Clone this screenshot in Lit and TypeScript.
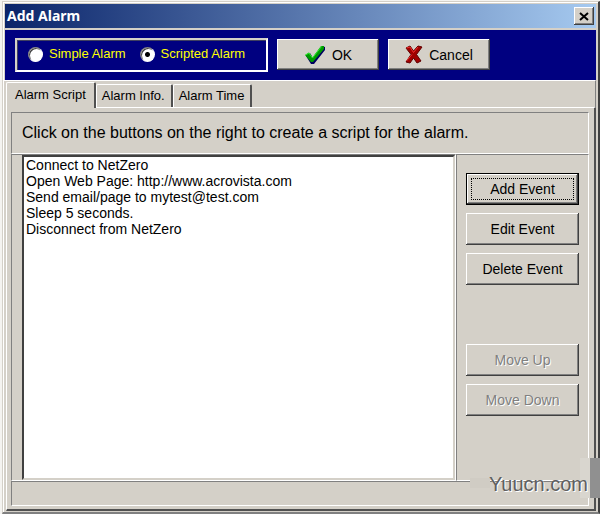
import { LitElement, html, css, svg } from "lit";
import { customElement, state } from "lit/decorators.js";

const check = svg`<path d="M2 11 L6 8 L9 13 L18 1 L21 2 L21 5 L10 19 L7 19 Z" fill="#000060"/><path d="M1 10 L5 7.500 L8.500 12.500 L17 1 L20 1 L20 4 L9 17 L7 17 Z" fill="#009a00"/><path d="M1.500 10 L5 8 L8.500 13 L17.500 1.500" fill="none" stroke="#30ee30"/>`;
const cross = svg`<path d="M1 3 L5 1 L8.500 6 L13 1 L17 2 L11.500 9.500 L16 16 L12 18 L8.500 13 L5 18 L1 17 L6 9.500 Z" fill="#a00000" stroke="#600000"/><path d="M1.500 3 L5 2 L8.500 7.500 L13 2 M1.500 16 L7 9.500" fill="none" stroke="#f03030"/>`;

@customElement("app-root")
export class AppRoot extends LitElement {
  @state() private mode = "scripted";
  @state() private tab = 0;

  private tabs = ["Alarm Script", "Alarm Info.", "Alarm Time"];
  private events = [
    "Connect to NetZero",
    "Open Web Page: http://www.acrovista.com",
    "Send email/page to mytest@test.com",
    "Sleep 5 seconds.",
    "Disconnect from NetZero",
  ];

  static styles = css`
    * { box-sizing: border-box; margin: 0; }
    :host {
      display: flex; min-height: 100vh; box-sizing: border-box; padding: 1px 0 0 2px;
      background: #f4f3f0; color: #000; position: relative;
      font: 14px/16px "Liberation Sans", Arial, sans-serif;
    }
    .window {
      flex: 1; display: flex; flex-direction: column; min-width: 0; padding: 1px;
      background: #d4d0c8; border: 1px solid #d4d0c8; border-right: 2px solid #404040; border-bottom: 2px solid #808080;
      box-shadow: inset 1px 1px #fff;
    }
    .title {
      display: flex; align-items: center; justify-content: space-between; height: 24px; margin: 1px 1px 2px 1px;
      padding: 0 2px; color: #fff; background: linear-gradient(90deg, #0a246a, #a6caf0);
    }
    .title h1 { font: bold 14px/16px "Noto Sans", sans-serif; }
    button { font: inherit; color: #000; background: #d4d0c8; padding: 0; border: 0; }
    .raised { box-shadow: inset -1px -1px #404040, inset 1px 1px #fff, inset -2px -2px #808080; }
    .close { width: 20px; height: 18px; display: grid; place-items: center; }
    .bar { display: flex; gap: 9px; padding: 8px 10px; height: 50px; margin: 0 1px; background: #000080; }
    .modes {
      display: flex; align-items: center; gap: 14px; width: 253px; height: 34px; padding: 0 8px 2px 11px;
      border: 2px solid #d4d0c8; border-color: #d4d0c8 #fff #fff #d4d0c8; box-shadow: inset 1px 1px #404060; color: #ff0; font-size: 13px;
    }
    .modes label { display: flex; align-items: center; gap: 6px; }
    .radio {
      appearance: none; width: 15px; height: 15px; border-radius: 50%; background: #fff;
      border: 1px solid; border-color: #808080 #fff #fff #808080; box-shadow: inset 1px 1px #404040;
    }
    .radio:checked { background: radial-gradient(circle, #000 2px, #fff 3px); }
    .action { width: 102px; height: 31px; margin-top: 1px; display: flex; align-items: center; justify-content: center; gap: 6px; }
    .tabs {
      display: flex; align-items: flex-end; height: 27px; padding-left: 2px; margin-right: 1px;
      border-top: 1px solid #fff; border-right: 1px solid #808080; font-size: 13px;
    }
    .tab {
      height: 23px; padding: 0 6px 0 5px; border-left: 1px solid #fff; border-top: 1px solid #fff;
      border-right: 2px solid #505050; border-radius: 2px 2px 0 0; white-space: nowrap;
    }
    .tab.on { height: 26px; padding: 0 8px 2px 8px; position: relative; z-index: 1; margin-bottom: -1px; }
    .page {
      flex: 1; display: flex; flex-direction: column; margin: 0 1px 0 2px; padding: 4px 5px 3px 4px;
      border: 1px solid #fff; border-right: 2px solid #505050; border-bottom: 2px solid #505050;
    }
    .sunk { border: 1px solid; border-color: #808080 #fff #fff #808080; }
    .hint { height: 42px; padding: 0 10px; display: flex; align-items: center; font-size: 16px; white-space: nowrap; }
    .body { flex: 1; display: flex; }
    .listwrap { flex: 1; min-width: 0; display: flex; padding: 0 0 0 10px; }
    .list {
      flex: 1; min-width: 0; appearance: none; background: #fff; color: #000; border: 2px solid;
      border-color: #404040 #d4d0c8 #d4d0c8 #404040; border-radius: 0; padding: 0 2px; outline: 0; font: inherit; overflow: hidden;
    }
    .list option { padding: 0; font: inherit; min-height: 16px; }
    .side { width: 133px; padding: 18px 9px; display: flex; flex-direction: column; gap: 8px; }
    .event { height: 32px; flex: none; }
    .default { border: 1px solid #000; outline: 1px dotted #000; outline-offset: -6px; }
    .move { margin-top: 51px; }
    .event:disabled { color: #808080; text-shadow: 1px 1px #fff; }
    .status { height: 25px; }
    .mark {
      position: absolute; right: 0; bottom: 16px; display: flex; align-items: center; justify-content: flex-end;
      width: 130px; height: 40px; font-size: 20px; line-height: 24px; color: #606060; text-shadow: 1px 1px #fff;
      background: linear-gradient(90deg, #d9d6cf 10px, #909090 10px) right / 20px 40px no-repeat,
        linear-gradient(#d0ccc4, #d0ccc4) 0 20px / 20px 10px no-repeat;
    }
    .mark span { padding: 12px 12px 0 0; }
  `;

  render() {
    return html`
      <main class="window">
        <header class="title">
          <h1>Add Alarm</h1>
          <button class="close raised" aria-label="Close">
            <svg width="10" height="9" viewBox="0 0 10 9"><path d="M1 1 L9 8 M9 1 L1 8" stroke="#000" stroke-width="2" /></svg>
          </button>
        </header>
        <div class="bar">
          <div class="modes" role="radiogroup" aria-label="Alarm type">
            ${["Simple", "Scripted"].map((m) => html`<label><input class="radio" type="radio" name="mode"
              .checked=${this.mode === m.toLowerCase()} @change=${() => (this.mode = m.toLowerCase())} />${m} Alarm</label>`)}
          </div>
          <button class="action raised"><svg width="22" height="20" viewBox="0 0 22 20">${check}</svg>OK</button>
          <button class="action raised"><svg width="18" height="19" viewBox="0 0 18 19">${cross}</svg>Cancel</button>
        </div>
        <div class="tabs" role="tablist">
          ${this.tabs.map((t, i) => html`<button role="tab" aria-selected=${this.tab === i}
            class="tab ${this.tab === i ? "on" : ""}" @click=${() => (this.tab = i)}>${t}</button>`)}
        </div>
        <section class="page" role="tabpanel">
          <p class="hint sunk">Click on the buttons on the right to create a script for the alarm.</p>
          <div class="body">
            <div class="listwrap sunk">
              <select class="list" size="5" aria-label="Script events">
                ${this.events.map((e) => html`<option>${e}</option>`)}
              </select>
            </div>
            <div class="side sunk">
              <button class="event raised default">Add Event</button>
              <button class="event raised">Edit Event</button>
              <button class="event raised">Delete Event</button>
              <button class="event raised move" disabled>Move Up</button>
              <button class="event raised" disabled>Move Down</button>
            </div>
          </div>
          <div class="status sunk"></div>
        </section>
      </main>
      <div class="mark"><span>Yuucn.com</span></div>
    `;
  }
}
